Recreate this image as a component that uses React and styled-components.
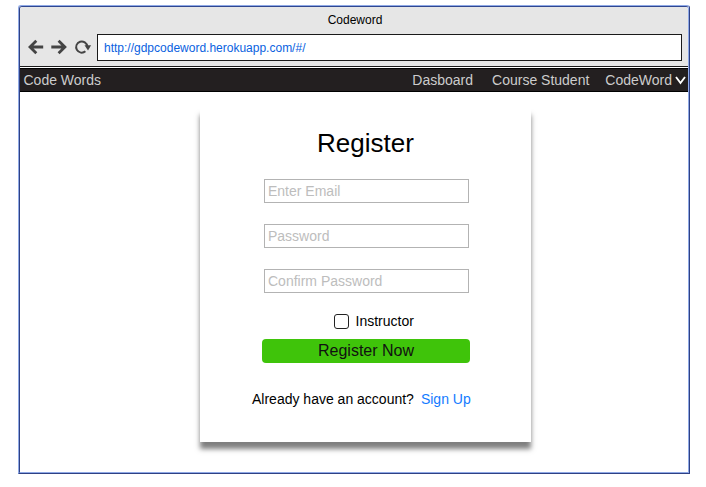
import React from "react";
import styled, { createGlobalStyle } from "styled-components";

const GlobalStyle = createGlobalStyle`
  * { box-sizing: border-box; }
  body {
    margin: 0;
    background: #fff;
    font-family: "Liberation Sans", Arial, sans-serif;
    color: #000;
  }
`;

const Page = styled.div`
  width: 706px;
  height: 487px;
  padding: 5px 0 0 18px;
  overflow: hidden;
`;

const Window = styled.div`
  width: 672px;
  height: 469px;
  border: 1px solid;
  border-color: #8fa9e6 #2f4184 #2f4184 #8fa9e6;
  border-radius: 3px 3px 0 0;
`;

const Frame = styled.div`
  height: 467px;
  border: 1px solid;
  border-color: #2f4690 #8fa9e6 #8fa9e6 #2f4184;
  border-radius: 3px 3px 0 0;
  display: flex;
  flex-direction: column;
`;

const Chrome = styled.header`
  height: 60px;
  flex: none;
  background: #e6e6e6;
  border-bottom: 1px solid #1a1a1a;
  border-radius: 3px 3px 0 0;
`;

const WindowTitle = styled.div`
  height: 27px;
  padding: 6px 0 0 2px;
  text-align: center;
  font-size: 12px;
  line-height: 14px;
`;

const Toolbar = styled.div`
  display: flex;
  align-items: center;
  height: 27px;
  padding: 0 6px 0 8px;
`;

const ToolIcons = styled.svg`
  width: 69px;
  height: 27px;
  flex: none;
`;

const Address = styled.div`
  flex: 1;
  height: 27px;
  border: 1px solid #1a1a1a;
  background: #fff;
  padding-left: 6px;
  font-size: 12px;
  line-height: 26px;
  color: #0a62e0;
`;

const Nav = styled.nav`
  display: flex;
  flex: none;
  height: 24px;
  margin-top: 1px;
  padding: 0 2px 0 3.5px;
  background: #231f20;
  border: solid #000;
  border-width: 1px 0;
  color: #ccc;
  font-size: 14px;
  line-height: 22px;
`;

const Brand = styled.span`
  flex: 1;
`;

const NavItem = styled.span`
  display: flex;
  align-items: center;
  margin-left: ${({ $gap = 19 }) => $gap}px;
`;

const Chevron = styled.svg`
  width: 11px;
  height: 9px;
  margin-left: 3px;
`;

const Card = styled.main`
  display: flex;
  flex-direction: column;
  width: 331px;
  height: 334px;
  margin: 16px 0 0 180px;
  padding: 20px 61px 0 62px;
  background: #fff;
  box-shadow: 0 7px 5px rgba(0, 0, 0, 0.5);
`;

const Heading = styled.h1`
  margin: 0 1px 21px 0;
  font-size: 26px;
  line-height: 30px;
  font-weight: 400;
  text-align: center;
`;

const Field = styled.input`
  display: block;
  width: 205px;
  height: 24px;
  margin: 0 0 21px 2px;
  padding: 0 3px;
  border: 1px solid #b3b3b3;
  border-radius: 0;
  font: 14px "Liberation Sans", Arial, sans-serif;
  &::placeholder { color: #bdbdbd; opacity: 1; }
`;

const CheckRow = styled.label`
  display: flex;
  align-items: center;
  height: 16px;
  margin: -1px 0 10px 72px;
  font-size: 14px;
  line-height: 16px;
`;

const Checkbox = styled.input`
  appearance: none;
  width: 15px;
  height: 15px;
  margin: 0 6.5px 0 0;
  border: 1px solid #222;
  border-radius: 3px;
  background: #fff;
`;

const Submit = styled.button`
  height: 24px;
  padding: 0;
  border: 0;
  border-radius: 4px;
  background: #3fc40a;
  color: #111;
  font: 16px/24px "Liberation Sans", Arial, sans-serif;
`;

const Footer = styled.p`
  margin: 28px 0 0 -10px;
  white-space: nowrap;
  font-size: 14px;
  line-height: 16px;
`;

const Link = styled.a`
  margin-left: 7px;
  color: #147bff;
`;

export default function App() {
  return (
    <Page>
      <GlobalStyle />
      <Window>
        <Frame>
          <Chrome>
            <WindowTitle>Codeword</WindowTitle>
            <Toolbar>
              <ToolIcons viewBox="0 0 69 27" fill="none" stroke="#444" strokeWidth="2.8">
                <path d="M15.2 13H2M8.3 6.8 2 13l6.3 6.2" />
                <path d="M23.3 13H37M30.6 6.8 36.9 13l-6.3 6.2" />
                <path d="M57.4 17.3A5.6 5.6 0 1 1 59.3 12.5" strokeWidth="1.9" />
                <path d="M56.5 11.3h6.6L60 16.4z" fill="#444" stroke="none" />
              </ToolIcons>
              <Address>http://gdpcodeword.herokuapp.com/#/</Address>
            </Toolbar>
          </Chrome>
          <Nav>
            <Brand>Code Words</Brand>
            <NavItem>Dasboard</NavItem>
            <NavItem>Course Student</NavItem>
            <NavItem $gap={16}>
              CodeWord
              <Chevron viewBox="0 0 11 9" fill="none" stroke="#fff" strokeWidth="1.9">
                <path d="M1 1l4.5 6L10 1" />
              </Chevron>
            </NavItem>
          </Nav>
          <Card>
            <Heading>Register</Heading>
            <Field type="email" placeholder="Enter Email" />
            <Field type="password" placeholder="Password" />
            <Field type="password" placeholder="Confirm Password" />
            <CheckRow>
              <Checkbox type="checkbox" />
              Instructor
            </CheckRow>
            <Submit>Register Now</Submit>
            <Footer>
              Already have an account?<Link>Sign Up</Link>
            </Footer>
          </Card>
        </Frame>
      </Window>
    </Page>
  );
}
